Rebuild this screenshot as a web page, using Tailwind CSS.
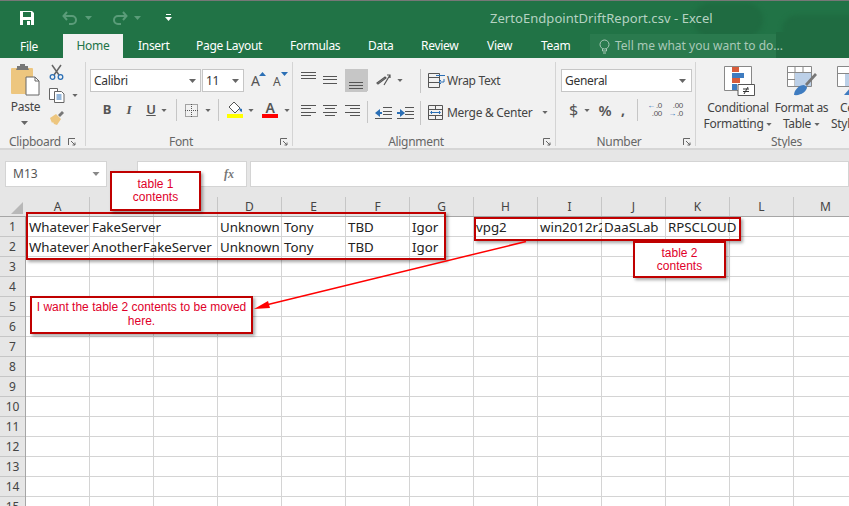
<!DOCTYPE html>
<html lang="en"><head><meta charset="utf-8"><script src="https://cdn.jsdelivr.net/npm/@tailwindcss/browser@4"></script></head>
<body class="m-0 overflow-hidden bg-white">
<div class="relative w-[849px] h-[506px] overflow-hidden bg-white font-['Noto_Sans','Open_Sans',sans-serif] text-[#444]">

<!-- title bar -->
<header class="relative h-[34px] bg-[#217346] border-t border-[#777] flex items-center overflow-hidden">
  <svg class="ml-[19px] w-[16px] h-[16px]" viewBox="0 0 16 16"><path d="M1 1h12l2 2v12H1z" fill="#fff"/><path d="M4 2h8v5H4z" fill="#217346"/><path d="M4 10h8v5H4z" fill="#217346"/><path d="M8 11h3v4H8z" fill="#fff"/></svg>
  <svg class="ml-[27px] w-[16px] h-[14px]" viewBox="0 0 16 14" fill="none" stroke="#5a9c79" stroke-width="2"><path d="M5 1 1.500 5 5 9M2 5h8a4 4 0 0 1 0 8H7"/></svg>
  <svg class="ml-[7px] w-[7px] h-[4px]" viewBox="0 0 7 4"><path d="M0 0h7L3.500 4z" fill="#5a9c79"/></svg>
  <svg class="ml-[20px] w-[16px] h-[14px]" viewBox="0 0 16 14" fill="none" stroke="#5a9c79" stroke-width="2"><path d="M11 1l3.500 4L11 9M14 5H6a4 4 0 0 0 0 8h3"/></svg>
  <svg class="ml-[6px] w-[7px] h-[4px]" viewBox="0 0 7 4"><path d="M0 0h7L3.500 4z" fill="#5a9c79"/></svg>
  <svg class="ml-[24px] w-[7px] h-[8px]" viewBox="0 0 7 8"><path d="M1 0h5v1H1zM0 3h7L3.500 7z" fill="#fff"/></svg>
  <div class="absolute left-[693px] top-[2px] w-[70px] h-[34px] rounded-full bg-[#1f6b41] blur-[2px]"></div>
  <div class="absolute left-[782px] top-[14px] w-[90px] h-[30px] rounded-full bg-[#1f6b41] blur-[2px]"></div>
  <div class="absolute left-[490px] top-[9px] text-[13px] tracking-[0.05px] leading-[16px] text-[#b5d2c2] whitespace-nowrap">ZertoEndpointDriftReport.csv - Excel</div>
</header>

<!-- tabs -->
<nav class="relative h-[24px] bg-[#217346] flex text-[12px] tracking-[-0.3px] leading-[24px] text-white">
  <div class="absolute left-[590px] top-0 w-[186px] h-[24px] bg-[#2a7a4e]"></div>
  <div class="absolute left-[776px] top-[-2px] w-[73px] h-[26px] bg-[#1f6b41]"></div>
  <span class="ml-[20px] w-[43px] pt-[1px]">File</span>
  <span class="w-[60px] text-center bg-[#f1f1f1] text-[#217346]">Home</span>
  <span class="ml-[15px] w-[43px]">Insert</span>
  <span class="ml-[15px] w-[79px]">Page Layout</span>
  <span class="ml-[15px] w-[63px]">Formulas</span>
  <span class="ml-[15px] w-[27px]">Data</span>
  <span class="ml-[26px] w-[43px]">Review</span>
  <span class="ml-[23px] w-[26px]">View</span>
  <span class="ml-[28px] w-[28px]">Team</span>
  <svg class="relative ml-[29px] mt-[5px] w-[13px] h-[15px]" viewBox="0 0 13 15" fill="none" stroke="#a9c9b8"><circle cx="6.500" cy="5.500" r="4.500"/><path d="M4.500 10v2h4v-2M5 14h3"/></svg>
  <span class="relative ml-[4px] tracking-normal text-[#a9c9b8] whitespace-nowrap">Tell me what you want to do...</span>
</nav>

<!-- ribbon -->
<section class="h-[92px] bg-[#f1f1f1] border-b-2 border-[#d6d6d6] flex text-[#444] tracking-[-0.3px]">
  <!-- Clipboard -->
  <div class="relative w-[86px] shrink-0">
    <div class="my-[4px] h-[84px] absolute right-0 top-0 w-px bg-[#d4d4d4]"></div>
    <div class="flex h-[76px]">
      <div class="w-[49px] flex flex-col items-center pt-[6px]">
        <svg class="w-[30px] h-[32px] ml-[2px]" viewBox="0 0 30 32"><rect x="0" y="4" width="22" height="26" rx="1" fill="#edc67f"/><path d="M6 4V2h3V0h5v2h3v2l1 2H5z" fill="#777"/><path d="M15 13h9l4 4v14H15z" fill="#fff" stroke="#666"/><path d="M24 13v4h4" fill="none" stroke="#666"/></svg>
        <span class="ml-[2px] mt-[3px] text-[12px] leading-[16px]">Paste</span>
        <svg class="mt-[6px] ml-[-1px] w-[7px] h-[4px]" viewBox="0 0 7 4"><path d="M0 0h7L3.500 4z" fill="#666"/></svg>
      </div>
      <div class="flex flex-col pt-[6px]">
        <svg class="w-[15px] h-[16px]" viewBox="0 0 15 16" fill="none"><path d="M3 1l7 10M12 1L5 11" stroke="#666" stroke-width="1.500"/><circle cx="3.500" cy="13" r="2.300" stroke="#2b6fb5" stroke-width="1.300"/><circle cx="11.500" cy="13" r="2.300" stroke="#2b6fb5" stroke-width="1.300"/></svg>
        <div class="flex items-center mt-[8px]">
          <svg class="w-[16px] h-[15px]" viewBox="0 0 16 15" fill="none"><path d="M.500.500h8v11h-8z" fill="#fff" stroke="#666"/><path d="M5.500 3.500h7l2.500 2.500v8.500H5.500z" fill="#fff" stroke="#666"/><path d="M7.500 7h5M7.500 9h5M7.500 11h5" stroke="#2b6fb5"/></svg>
          <svg class="ml-[7px] w-[6px] h-[3px]" viewBox="0 0 7 4"><path d="M0 0h7L3.500 4z" fill="#666"/></svg>
        </div>
        <svg class="mt-[7px] w-[16px] h-[15px]" viewBox="0 0 16 15"><path d="M9 5l4-4 2 2-4 4z" fill="#777"/><path d="M1 8l6-4 5 5-4 6-3-1-1-2-1 1z" fill="#edc67f"/></svg>
      </div>
    </div>
    <div class="flex items-center h-[16px]">
      <span class="ml-[9px] w-[59px] text-[12px] leading-[16px] text-[#666]">Clipboard</span>
      <svg class="w-[8px] h-[8px]" viewBox="0 0 8 8" fill="none" stroke="#666"><path d="M.500 7V.500H7M3 3l4 4M7 4.500V7H4.500"/></svg>
    </div>
  </div>

  <!-- Font -->
  <div class="relative w-[207px] shrink-0">
    <div class="absolute right-0 top-[4px] w-px h-[84px] bg-[#d4d4d4]"></div>
    <div class="flex pl-[4px] pt-[11px] items-start">
      <div class="w-[111px] h-[23px] bg-white border border-[#c6c6c6] flex items-center justify-between px-[3px] text-[12px]"><span class="text-[#333]">Calibri</span><svg class="mr-[1px] w-[7px] h-[4px]" viewBox="0 0 7 4"><path d="M0 0h7L3.500 4z" fill="#666"/></svg></div>
      <div class="ml-[1px] w-[42px] h-[23px] bg-white border border-[#c6c6c6] flex items-center justify-between px-[3px] text-[12px]"><span class="text-[#333]">11</span><svg class="mr-[1px] w-[7px] h-[4px]" viewBox="0 0 7 4"><path d="M0 0h7L3.500 4z" fill="#666"/></svg></div>
      <div class="relative ml-[7px] w-[15px] h-[23px] text-[14px] leading-[24px] text-[#555]">A<svg class="absolute left-[8px] top-[3px] w-[7px] h-[4px]" viewBox="0 0 7 4"><path d="M0 4h7L3.500 0z" fill="#2b6fb5"/></svg></div>
      <div class="relative ml-[7px] w-[15px] h-[23px] text-[12px] leading-[25px] text-[#555]">A<svg class="absolute left-[8px] top-[3px] w-[7px] h-[4px]" viewBox="0 0 7 4"><path d="M0 0h7L3.500 4z" fill="#2b6fb5"/></svg></div>
    </div>
    <div class="flex items-center h-[24px] mt-[6px] pl-[10px] text-[13px] text-[#555]">
      <span class="w-[22px] text-center font-bold">B</span>
      <span class="w-[22px] text-center italic font-semibold font-['Liberation_Serif',serif]">I</span>
      <span class="w-[22px] text-center underline font-semibold">U</span>
      <svg class="ml-[-1px] w-[6px] h-[3px]" viewBox="0 0 7 4"><path d="M0 0h7L3.500 4z" fill="#666"/></svg>
      <div class="ml-[9px] w-px h-[22px] bg-[#c6c6c6]"></div>
      <svg class="ml-[8px] w-[13px] h-[13px]" viewBox="0 0 13 13" fill="none" stroke="#555" stroke-dasharray="1 1"><path d="M.500.500h12v12H.500zM6.500 0v13M0 6.500h13"/></svg>
      <svg class="ml-[7px] w-[6px] h-[3px]" viewBox="0 0 7 4"><path d="M0 0h7L3.500 4z" fill="#666"/></svg>
      <div class="ml-[7px] w-px h-[22px] bg-[#c6c6c6]"></div>
      <div class="ml-[7px] w-[17px] flex flex-col items-center">
        <svg class="w-[16px] h-[12px]" viewBox="0 0 16 12"><path d="M7 0l6 6-5 5-6-6z" fill="#fff" stroke="#555"/><path d="M12 6l3 1v3l-2-1z" fill="#2b6fb5"/></svg>
        <div class="w-[16px] h-[4px] bg-[#ffff00]"></div>
      </div>
      <svg class="ml-[5px] w-[6px] h-[3px]" viewBox="0 0 7 4"><path d="M0 0h7L3.500 4z" fill="#666"/></svg>
      <div class="ml-[8px] w-[16px] flex flex-col items-center text-[14px] leading-[12px] font-semibold text-[#555]"><span>A</span><div class="w-[16px] h-[4px] bg-[#ff0000]"></div></div>
      <svg class="ml-[6px] w-[6px] h-[3px]" viewBox="0 0 7 4"><path d="M0 0h7L3.500 4z" fill="#666"/></svg>
    </div>
    <div class="relative h-[16px] mt-[12px] text-center text-[12px] leading-[16px] text-[#666] pr-[17px]">Font
      <svg class="absolute right-[5px] top-[4px] w-[8px] h-[8px]" viewBox="0 0 8 8" fill="none" stroke="#666"><path d="M.500 7V.500H7M3 3l4 4M7 4.500V7H4.500"/></svg>
    </div>
  </div>

  <!-- Alignment -->
  <div class="relative w-[263px] shrink-0">
    <div class="absolute right-0 top-[4px] w-px h-[84px] bg-[#d4d4d4]"></div>
    <div class="flex h-[76px] pt-[11px] pl-[8px]">
      <div class="flex flex-col w-[66px]">
        <div class="flex h-[23px]">
          <svg class="w-[22px] h-[23px]" viewBox="0 0 22 23" stroke="#555"><path d="M0 3.500h15M0 6.500h15M0 9.500h15"/></svg>
          <svg class="w-[22px] h-[23px]" viewBox="0 0 22 23" stroke="#555"><path d="M0 7.500h14M0 10.500h14M0 14.500h14"/></svg>
          <div class="w-[22px] h-[23px] bg-[#c6c6c6]"><svg class="w-[22px] h-[23px]" viewBox="0 0 22 23" stroke="#555"><path d="M4 13.500h14M4 16.500h14M4 19.500h14"/></svg></div>
        </div>
        <div class="flex h-[23px] mt-[9px]">
          <svg class="w-[22px] h-[23px]" viewBox="0 0 22 23" stroke="#555"><path d="M0 4.500h15M0 7.500h10M0 11.500h15M0 14.500h10"/></svg>
          <svg class="w-[22px] h-[23px]" viewBox="0 0 22 23" stroke="#555"><path d="M0 4.500h14M2 7.500h10M0 11.500h14M2 14.500h10"/></svg>
          <svg class="w-[22px] h-[23px]" viewBox="0 0 22 23" stroke="#555"><path d="M0 4.500h15M5 7.500h10M0 11.500h15M5 14.500h10"/></svg>
        </div>
      </div>
      <div class="flex flex-col">
        <div class="w-px h-[22px] bg-[#c6c6c6]"></div>
        <div class="w-px h-[22px] bg-[#c6c6c6] mt-[10px]"></div>
      </div>
      <div class="flex flex-col ml-[7px] w-[45px]">
        <div class="flex items-center h-[23px]">
          <svg class="w-[17px] h-[17px]" viewBox="0 0 17 17" fill="none" stroke="#555"><path d="M2 11l8-6 1 1-8 6zM9 13l6-10M12 3h3v3" stroke-width="1.200"/></svg>
          <svg class="ml-[5px] w-[6px] h-[3px]" viewBox="0 0 7 4"><path d="M0 0h7L3.500 4z" fill="#666"/></svg>
        </div>
        <div class="flex items-center h-[23px] mt-[9px]">
          <svg class="w-[17px] h-[14px]" viewBox="0 0 17 14"><path d="M0 7l5-4v8z" fill="#2b6fb5"/><path d="M4 6h3v2H4z" fill="#2b6fb5"/><path d="M8 1.500h9M8 5.500h9M8 8.500h9M8 12.500h9M0 12.500h8" stroke="#555"/></svg>
          <svg class="ml-[5px] w-[17px] h-[14px]" viewBox="0 0 17 14"><path d="M7 7L2 3v8z" fill="#2b6fb5" transform="translate(1)"/><path d="M0 6h3v2H0z" fill="#2b6fb5"/><path d="M8 1.500h9M8 5.500h9M8 8.500h9M8 12.500h9M0 12.500h8" stroke="#555"/></svg>
        </div>
      </div>
      <div class="flex flex-col">
        <div class="w-px h-[24px] bg-[#c6c6c6]"></div>
        <div class="w-px h-[24px] bg-[#c6c6c6] mt-[8px]"></div>
      </div>
      <div class="flex flex-col ml-[7px] text-[12px] leading-[23px] whitespace-nowrap">
        <div class="flex items-center h-[23px]">
          <svg class="w-[17px] h-[15px]" viewBox="0 0 17 15" fill="none" stroke="#555"><path d="M.500.500h11v14H.500zM0 4.500h12M0 9.500h11"/><path d="M8 2.500h9M16 6v3h-5M13 7l-2 2 2 2" stroke="#2b6fb5"/></svg>
          <span class="ml-[2px]">Wrap Text</span>
        </div>
        <div class="flex items-center h-[23px] mt-[9px]">
          <svg class="w-[15px] h-[15px]" viewBox="0 0 15 15" fill="none" stroke="#555"><path d="M.500.500h14v14H.500zM0 4.500h15M0 10.500h15M7.500 0v4.500M7.500 10.500V15"/><path d="M3 7.500h9M4 6L2.500 7.500 4 9M11 6l1.500 1.500L11 9" stroke="#2b6fb5"/></svg>
          <span class="ml-[4px]">Merge &amp; Center</span>
          <svg class="ml-[10px] w-[6px] h-[3px]" viewBox="0 0 7 4"><path d="M0 0h7L3.500 4z" fill="#666"/></svg>
        </div>
      </div>
    </div>
    <div class="relative h-[16px] text-center text-[12px] leading-[16px] text-[#666] pr-[17px]">Alignment
      <svg class="absolute right-[5px] top-[4px] w-[8px] h-[8px]" viewBox="0 0 8 8" fill="none" stroke="#666"><path d="M.500 7V.500H7M3 3l4 4M7 4.500V7H4.500"/></svg>
    </div>
  </div>

  <!-- Number -->
  <div class="relative w-[140px] shrink-0">
    <div class="absolute right-0 top-[4px] w-px h-[84px] bg-[#d4d4d4]"></div>
    <div class="ml-[5px] mt-[11px] w-[131px] h-[23px] bg-white border border-[#c6c6c6] flex items-center justify-between px-[3px] text-[12px]"><span class="text-[#333]">General</span><svg class="mr-[2px] w-[7px] h-[4px]" viewBox="0 0 7 4"><path d="M0 0h7L3.500 4z" fill="#666"/></svg></div>
    <div class="flex items-center h-[24px] mt-[6px] pl-[12px] text-[#555] text-[16px]">
      <span class="w-[11px] text-center">$</span>
      <svg class="ml-[5px] w-[6px] h-[3px]" viewBox="0 0 7 4"><path d="M0 0h7L3.500 4z" fill="#666"/></svg>
      <span class="ml-[8px] w-[14px] text-center text-[15px] font-semibold">%</span>
      <span class="ml-[9px] w-[8px] font-bold text-[14px] leading-[14px]">,</span>
      <div class="ml-[8px] w-px h-[22px] bg-[#c6c6c6]"></div>
      <div class="ml-[7px] w-[17px] flex flex-wrap justify-end text-[8px] leading-[8px] font-['Liberation_Sans',sans-serif]"><span class="text-[#2b6fb5] font-bold mr-[1px]">←</span><span>.0</span><span>.00</span></div>
      <div class="ml-[5px] w-[16px] flex flex-wrap justify-end text-[8px] leading-[8px] font-['Liberation_Sans',sans-serif]"><span>.00</span><span class="text-[#2b6fb5] font-bold mr-[1px]">→</span><span>.0</span></div>
    </div>
    <div class="relative h-[16px] mt-[12px] text-center text-[12px] leading-[16px] text-[#666] pr-[14px]">Number
      <svg class="absolute right-[5px] top-[4px] w-[8px] h-[8px]" viewBox="0 0 8 8" fill="none" stroke="#666"><path d="M.500 7V.500H7M3 3l4 4M7 4.500V7H4.500"/></svg>
    </div>
  </div>

  <!-- Styles -->
  <div class="relative flex-1 overflow-hidden">
    <div class="flex h-[76px] text-[12px] leading-[16px] text-center">
      <div class="ml-[7px] w-[70px] shrink-0 flex flex-col items-center pt-[8px]">
        <svg class="ml-[2px] w-[31px] h-[30px]" viewBox="0 0 31 30"><path d="M.500.500h27v24H.500z" fill="#fff" stroke="#888"/><path d="M8 1h7v5H8zM8 12h8v5H8z" fill="#d85c3a"/><path d="M8 7h12v5H8zM8 18h5v6H8z" fill="#3f7cc0"/><path d="M14 18.500h16.500v11H14z" fill="#fff" stroke="#555"/><path d="M19 23h6M19 25.500h6M24 21l-4 7" stroke="#333" fill="none"/></svg>
        <span class="mt-[4px]">Conditional</span>
        <span class="whitespace-nowrap">Formatting<svg class="inline ml-[3px] w-[6px] h-[3px]" viewBox="0 0 7 4"><path d="M0 0h7L3.500 4z" fill="#666"/></svg></span>
      </div>
      <div class="ml-[-1px] w-[59px] shrink-0 flex flex-col items-center pt-[8px]">
        <svg class="w-[30px] h-[30px]" viewBox="0 0 30 30"><path d="M.500.500h24v20H.500zM0 6.500h25M0 13.500h25M8 0v21M16 0v21" fill="#fff" stroke="#888"/><path d="M8 7h16v13H8z" fill="#bcd0e8"/><path d="M18 18L28 7l2 2-10 11z" fill="#777"/><path d="M7 29c0-5 5-10 10-10l3 2c0 4-6 9-13 8z" fill="#3f7cc0"/></svg>
        <span class="mt-[4px] whitespace-nowrap">Format as</span>
        <span class="whitespace-nowrap">Table<svg class="inline ml-[3px] w-[6px] h-[3px]" viewBox="0 0 7 4"><path d="M0 0h7L3.500 4z" fill="#666"/></svg></span>
      </div>
      <div class="w-[40px] shrink-0 flex flex-col items-start pt-[8px] text-left">
        <svg class="ml-[6px] w-[30px] h-[30px]" viewBox="0 0 30 30"><path d="M.500.500h24v20H.500zM0 7.500h25" fill="#fff" stroke="#888"/><path d="M8 8h16v12H8z" fill="#bcd0e8"/><path d="M7 29l7-8h8v8z" fill="#3f7cc0"/></svg>
        <span class="mt-[4px] ml-[9px] whitespace-nowrap">Cell</span>
        <span class="whitespace-nowrap">Styles</span>
      </div>
    </div>
    <div class="h-[16px] text-center text-[12px] leading-[16px] text-[#666] w-[181px]">Styles</div>
  </div>
</section>

<!-- formula bar -->
<div class="h-[47px] bg-[#e6e6e6] flex items-start pt-[11px]">
  <div class="ml-[5px] w-[102px] h-[26px] bg-white border border-[#d4d4d4] flex items-center justify-between pl-[7px] pr-[6px] text-[12px] text-[#555]"><span>M13</span><svg class="w-[8px] h-[4px]" viewBox="0 0 7 4"><path d="M0 0h7L3.500 4z" fill="#888"/></svg></div>
  <div class="ml-[30px] w-[110px] h-[26px] bg-white border border-[#d4d4d4] flex items-center justify-end pr-[12px] text-[12px] italic font-bold text-[#777] font-['Liberation_Serif',serif]">fx</div>
  <div class="ml-[3px] flex-1 h-[26px] bg-white border border-[#d4d4d4]"></div>
</div>

<!-- sheet -->
<div class="relative text-[#222]">
  <div class="flex h-[20px] bg-[#e6e6e6] border-b border-[#a6a6a6] text-[12px] leading-[19px] text-[#444]">
    <div class="relative w-[26px] shrink-0"><svg class="absolute right-[3px] bottom-[2px] w-[12px] h-[12px]" viewBox="0 0 12 12"><path d="M12 0v12H0z" fill="#b8b8b8"/></svg></div>
    <span class="w-[64px] shrink-0 text-center border-r border-[#c6c6c6]">A</span><span class="w-[64px] shrink-0 text-center border-r border-[#c6c6c6]">B</span><span class="w-[64px] shrink-0 text-center border-r border-[#c6c6c6]">C</span><span class="w-[64px] shrink-0 text-center border-r border-[#c6c6c6]">D</span><span class="w-[64px] shrink-0 text-center border-r border-[#c6c6c6]">E</span><span class="w-[64px] shrink-0 text-center border-r border-[#c6c6c6]">F</span><span class="w-[64px] shrink-0 text-center border-r border-[#c6c6c6]">G</span><span class="w-[64px] shrink-0 text-center border-r border-[#c6c6c6]">H</span><span class="w-[64px] shrink-0 text-center border-r border-[#c6c6c6]">I</span><span class="w-[64px] shrink-0 text-center border-r border-[#c6c6c6]">J</span><span class="w-[64px] shrink-0 text-center border-r border-[#c6c6c6]">K</span><span class="w-[64px] shrink-0 text-center border-r border-[#c6c6c6]">L</span><span class="w-[64px] shrink-0 text-center border-r border-[#c6c6c6]">M</span>
  </div>
  <div class="flex">
    <div class="w-[26px] shrink-0 bg-[#e6e6e6] border-r border-[#a6a6a6] text-[12px] leading-[20px] text-[#444] text-center">
      <div class="h-[20px] border-b border-[#c6c6c6]">1</div><div class="h-[20px] border-b border-[#c6c6c6]">2</div><div class="h-[20px] border-b border-[#c6c6c6]">3</div><div class="h-[20px] border-b border-[#c6c6c6]">4</div><div class="h-[20px] border-b border-[#c6c6c6]">5</div><div class="h-[20px] border-b border-[#c6c6c6]">6</div><div class="h-[20px] border-b border-[#c6c6c6]">7</div><div class="h-[20px] border-b border-[#c6c6c6]">8</div><div class="h-[20px] border-b border-[#c6c6c6]">9</div><div class="h-[20px] border-b border-[#c6c6c6]">10</div><div class="h-[20px] border-b border-[#c6c6c6]">11</div><div class="h-[20px] border-b border-[#c6c6c6]">12</div><div class="h-[20px] border-b border-[#c6c6c6]">13</div><div class="h-[20px] border-b border-[#c6c6c6]">14</div><div class="h-[20px] border-b border-[#c6c6c6]">15</div>
    </div>
    <div class="flex-1 h-[300px] bg-[linear-gradient(to_left,#d4d4d4_1px,transparent_1px),linear-gradient(to_top,#d4d4d4_1px,transparent_1px)] bg-[size:64px_20px] text-[13.3px] leading-[21px]">
      <div class="flex h-[20px] whitespace-nowrap">
        <span class="w-[64px] pl-[3px] shrink-0">Whatever</span><span class="w-[128px] pl-[2px] shrink-0">FakeServer</span><span class="w-[64px] pl-[2px] shrink-0">Unknown</span><span class="w-[64px] pl-[2px] shrink-0">Tony</span><span class="w-[64px] pl-[2px] shrink-0">TBD</span><span class="w-[64px] pl-[2px] shrink-0">Igor</span><span class="w-[64px] pl-[2px] shrink-0">vpg2</span><span class="w-[64px] pl-[2px] shrink-0 overflow-hidden">win2012r2</span><span class="w-[64px] pl-[2px] shrink-0">DaaSLab</span><span class="w-[64px] pl-[2px] shrink-0">RPSCLOUD</span>
      </div>
      <div class="flex h-[20px] whitespace-nowrap">
        <span class="w-[64px] pl-[3px] shrink-0">Whatever</span><span class="w-[128px] pl-[2px] shrink-0">AnotherFakeServer</span><span class="w-[64px] pl-[2px] shrink-0">Unknown</span><span class="w-[64px] pl-[2px] shrink-0">Tony</span><span class="w-[64px] pl-[2px] shrink-0">TBD</span><span class="w-[64px] pl-[2px] shrink-0">Igor</span>
      </div>
    </div>
  </div>
</div>

<!-- annotations -->
<div class="absolute left-[26px] top-[212px] w-[420px] h-[48px] border-2 border-[#c00000] shadow-[2px_2px_3px_rgba(0,0,0,0.35)]"></div>
<div class="absolute left-[474px] top-[217px] w-[267px] h-[24px] border-2 border-[#c00000] shadow-[2px_2px_3px_rgba(0,0,0,0.35)]"></div>
<div class="absolute left-[110px] top-[171px] w-[91px] h-[40px] bg-white border-2 border-[#c00000] shadow-[2px_2px_3px_rgba(0,0,0,0.35)] flex items-center justify-center text-center text-[12px] leading-[13px] text-[#e0002a] font-['Liberation_Sans',sans-serif]">table 1<br>contents</div>
<div class="absolute left-[633px] top-[241px] w-[93px] h-[37px] bg-white border-2 border-[#c00000] shadow-[2px_2px_3px_rgba(0,0,0,0.35)] flex items-center justify-center text-center text-[12px] leading-[13px] text-[#e0002a] font-['Liberation_Sans',sans-serif]">table 2<br>contents</div>
<div class="absolute left-[30px] top-[296px] w-[223px] h-[38px] bg-white border-2 border-[#c00000] shadow-[2px_2px_3px_rgba(0,0,0,0.35)] flex items-center justify-center text-center text-[12px] leading-[14px] pb-[2px] text-[#e0002a] font-['Liberation_Sans',sans-serif]">I want the table 2 contents to be moved<br>here.</div>
<svg class="absolute left-0 top-0 w-[849px] h-[506px] pointer-events-none" viewBox="0 0 849 506"><path d="M526 241.500L266 305" stroke="#ff0000" stroke-width="1.500" fill="none"/><path d="M254 309l14-8 2 7z" fill="#ff0000"/></svg>
</div>
</body></html>
